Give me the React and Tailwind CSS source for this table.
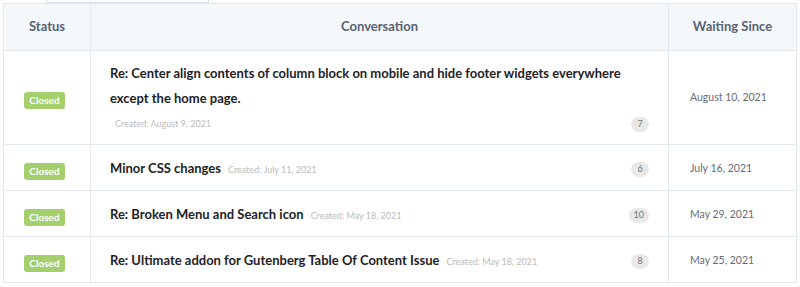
const rows = [
  {
    title: 'Re: Center align contents of column block on mobile and hide footer widgets everywhere except the home page.',
    created: 'Created: August 9, 2021',
    count: 7,
    waiting: 'August 10, 2021',
    long: true,
  },
  { title: 'Minor CSS changes', created: 'Created: July 11, 2021', count: 6, waiting: 'July 16, 2021' },
  { title: 'Re: Broken Menu and Search icon', created: 'Created: May 18, 2021', count: 10, waiting: 'May 29, 2021' },
  { title: 'Re: Ultimate addon for Gutenberg Table Of Content Issue', created: 'Created: May 18, 2021', count: 8, waiting: 'May 25, 2021' },
]

function Badge() {
  return (
    <span className="inline-flex h-[17px] w-[41px] items-center justify-center rounded-[3px] bg-[#a3cf6c] text-[10px] font-bold text-white">
      Closed
    </span>
  )
}

function Count({ n }) {
  return (
    <span className="inline-flex h-[15px] min-w-[18px] items-center justify-center rounded-full bg-[#e8e8e8] px-[5px] text-[9px] text-[#777]">
      {n}
    </span>
  )
}

export default function App() {
  return (
    <div className="h-[287px] w-[800px] bg-white font-['Lato','Liberation_Sans',sans-serif]">
      {/* tab edge above the table */}
      <div className="ml-[46px] h-[3px] w-[163px] border border-t-0 border-[#dcdfe3]" />

      <table className="ml-[3px] w-[793px] table-fixed border-collapse">
        <colgroup>
          <col className="w-[87px]" />
          <col className="w-[578px]" />
          <col className="w-[128px]" />
        </colgroup>
        <thead>
          <tr className="h-[47px] bg-[#f5f8fb] text-[13px] font-bold text-[#5a6273]">
            <th className="border border-[#e3e8ed]">Status</th>
            <th className="border border-[#e3e8ed]">Conversation</th>
            <th className="border border-[#e3e8ed]">Waiting Since</th>
          </tr>
        </thead>
        <tbody>
          {rows.map((r) => (
            <tr key={r.title} className={r.long ? 'h-[94px]' : 'h-[46px]'}>
              <td className={`border border-[#e3e8ed] pl-[20px] align-middle ${r.long ? '' : 'pt-[3px]'}`}>
                <Badge />
              </td>
              <td className={`border border-[#e3e8ed] pl-[19px] pr-[19px] align-middle ${r.long ? '' : 'pt-[3px]'}`}>
                {r.long ? (
                  <div className="-mt-[3px]">
                    <div className="text-[13px] leading-[25px] font-bold text-[#1e2226]">{r.title}</div>
                    <div className="mt-[6px] flex items-center justify-between pl-[5px]">
                      <span className="text-[9px] text-[#bbbbbb]">{r.created}</span>
                      <Count n={r.count} />
                    </div>
                  </div>
                ) : (
                  <div className="flex items-center justify-between">
                    <div className="flex items-baseline gap-[7px]">
                      <span className="text-[13px] font-bold text-[#1e2226]">{r.title}</span>
                      <span className="text-[9px] text-[#bbbbbb]">{r.created}</span>
                    </div>
                    <Count n={r.count} />
                  </div>
                )}
              </td>
              <td className={`border border-[#e3e8ed] pl-[21px] align-middle text-[10.5px] text-[#646b78] ${r.long ? '' : 'pt-[3px]'}`}>
                {r.waiting}
              </td>
            </tr>
          ))}
        </tbody>
      </table>
    </div>
  )
}
